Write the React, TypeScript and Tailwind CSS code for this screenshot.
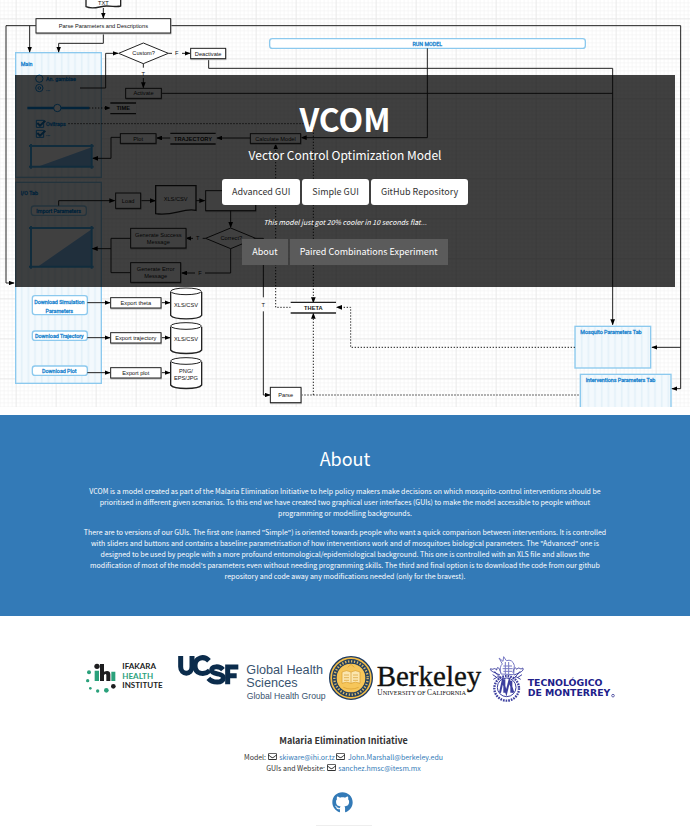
import type { ReactNode } from "react";
import { FaGithub, FaRegEnvelope } from "react-icons/fa";

const INK = "#222";
const SKY = "#8cc9ee";
const LABEL = "#2486cf";
const DEEP = "#0a8ce6";

type BoxProps = { x: number; y: number; w: number; h: number; lines?: string[] };

function Label({ x, y, children, bold }: { x: number; y: number; children: ReactNode; bold?: boolean }) {
  return (
    <text x={x} y={y + 6} textAnchor="middle" fill="#111" stroke="none" fontSize="17" fontWeight={bold ? 700 : 400}>
      {children}
    </text>
  );
}

function Box({ x, y, w, h, lines = [] }: BoxProps) {
  return (
    <g>
      <rect x={x + 1} y={y + 3} width={w} height={h} fill="#999" stroke="#bbb" strokeWidth="3" />
      <rect x={x} y={y} width={w} height={h} fill="#fff" />
      {lines.map((line, i) => (
        <Label key={line} x={x + w / 2} y={y + h / 2 + (i - (lines.length - 1) / 2) * 20}>
          {line}
        </Label>
      ))}
    </g>
  );
}

function Store({ x, y, w, name }: { x: number; y: number; w: number; name: string }) {
  return (
    <g>
      <rect x={x} y={y} width={w} height="32" fill="#fff" stroke="none" />
      <path d={`M${x} ${y}h${w}M${x} ${y + 32}h${w}`} strokeWidth="4" />
      <Label x={x + w / 2} y={y + 16} bold>
        {name}
      </Label>
    </g>
  );
}

function Cylinder({ x, y, lines }: { x: number; y: number; lines: string[] }) {
  return (
    <g>
      <path d={`M${x} ${y + 12}v70c10 14 83 14 93 0v-70`} fill="#fff" strokeWidth="4" />
      <ellipse cx={x + 46} cy={y + 10} rx="46" ry="10" fill="#fff" />
      {lines.map((line, i) => (
        <Label key={line} x={x + 46} y={y + 50 + (i - (lines.length - 1) / 2) * 20}>
          {line}
        </Label>
      ))}
    </g>
  );
}

function Wire({ d, dotted }: { d: string; dotted?: boolean }) {
  return <path d={d} fill="none" markerEnd="url(#tip)" strokeDasharray={dotted ? "4 5" : undefined} />;
}

function Panel({ x, y, w, h }: BoxProps) {
  return <rect x={x} y={y} width={w} height={h} fill="url(#hatch)" stroke={SKY} strokeWidth="4" />;
}

type NoteProps = { x: number; y: number; children: ReactNode; anchor?: "middle" | "start"; color?: string };

function Note({ x, y, children, anchor = "middle", color = LABEL }: NoteProps) {
  return (
    <text x={x} y={y + 6} textAnchor={anchor} fill={color} stroke={color} strokeWidth="1" fontSize="16" fontFamily="Roboto, sans-serif">
      {children}
    </text>
  );
}

function Pill({ x, y, w, h }: BoxProps) {
  return <rect x={x} y={y} width={w} height={h} rx="8" fill="#fff" stroke={SKY} strokeWidth="4" />;
}

function Plot({ x, y, h }: { x: number; y: number; h: number }) {
  return (
    <g>
      <rect x={x} y={y} width="182" height={h} fill="#fff" stroke="none" />
      <path d={`M${x + 20} ${y + h}L${x + 182} ${y + 4}v${h - 4}z`} fill="#80bcf0" stroke="none" />
      <path
        d={`M${x} ${y - 6}v${h + 12}M${x + 182} ${y - 6}v${h + 12}M${x - 6} ${y}h194M${x - 6} ${y + h}h194`}
        fill="none"
        stroke="#45b0f0"
        strokeWidth="6"
      />
    </g>
  );
}

function FlowDiagram() {
  return (
    <svg
      aria-hidden="true"
      className="absolute inset-0 h-full w-full"
      viewBox="0 0 2070 1221"
      preserveAspectRatio="xMidYMin slice"
      fontFamily="'Liberation Sans', Arial, sans-serif"
      stroke={INK}
      strokeWidth="3"
    >
      <defs>
        <pattern id="minor" x="47" y="55" width="12" height="12" patternUnits="userSpaceOnUse">
          <path d="M0 0H12M0 0V12" stroke="#f0f0f0" strokeWidth="3" />
        </pattern>
        <pattern id="major" x="47" y="55" width="120" height="120" patternUnits="userSpaceOnUse">
          <path d="M0 0H120M0 0V120" stroke="#e6e6e6" strokeWidth="4" />
        </pattern>
        <pattern id="hatch" width="20" height="20" patternUnits="userSpaceOnUse">
          <rect width="20" height="20" fill="#f3f9fd" stroke="none" />
          <path d="M5 0V20" stroke="#e4f1f9" strokeWidth="5" />
        </pattern>
        <marker id="tip" markerUnits="userSpaceOnUse" markerWidth="18" markerHeight="14" refX="16" refY="7" orient="auto">
          <path d="M0 0L18 7L0 14z" fill="#000" stroke="none" />
        </marker>
      </defs>
      <rect width="2070" height="1221" fill="url(#minor)" stroke="none" />
      <rect width="2070" height="1221" fill="url(#major)" stroke="none" />

      <Panel x={47} y={158} w={257} h={374} />
      <Panel x={47} y={547} w={257} h={603} />
      <Panel x={1725} y={979} w={227} h={125} />
      <Panel x={1741} y={1123} w={272} h={110} />

      <path d="M258 -10V20C280 30 300 18 320 18S350 22 362 18V-10" fill="#fff" strokeWidth="4" />
      <Label x={310} y={9}>TXT</Label>
      <Wire d="M310 24V54" />
      <Wire d="M108 77H18V849H42" />
      <Wire d="M89 77V156" />
      <Wire d="M310 100V130H176V156" />
      <path d="M512 77H2042V1166" fill="none" />
      <Wire d="M2042 1042H1956" />
      <Wire d="M2042 1166H2016" />
      <Box x={108} y={56} w={404} h={43} lines={["Parse Parameters and Descriptions"]} />

      <Wire d="M240 264H317V160H354" />
      <path d="M356 160L430 129L505 160L430 191z" fill="#fff" />
      <Label x={431} y={160}>Custom?</Label>
      <path d="M505 160H516M430 191V203" />
      <Label x={530} y={160}>F</Label>
      <Wire d="M546 160H570" />
      <Label x={430} y={221}>T</Label>
      <Wire d="M430 234V263" />
      <path d="M626 176V205H1838" fill="none" />
      <Wire d="M1838 205V974" />
      <path d="M484 280H1838" />
      <Box x={572} y={145} w={105} h={31} lines={["Deactivate"]} />
      <Box x={377} y={265} w={107} h={30} lines={["Activate"]} />

      <Pill x={809} y={116} w={947} h={29} />
      <Note x={1282} y={132}>RUN MODEL</Note>
      <Wire d="M1282 145V413H904" />
      <Wire d="M751 414H651" />
      <Wire d="M512 414H470" />
      <Wire d="M361 412H333V475H278" />
      <Wire d="M186 324H330" dotted />
      <path d="M205 371H940" strokeDasharray="4 5" />
      <Wire d="M940 371V908" dotted />
      <Wire d="M872 922H827V432" dotted />
      <Store x={331} y={309} w={77} name="TIME" />
      <Store x={511} y={400} w={136} name="TRAJECTORY" />
      <Box x={361} y={401} w={107} h={29} lines={["Plot"]} />
      <Box x={751} y={401} w={151} h={29} lines={["Calculate Model"]} />

      <Note x={62} y={192} anchor="start">Main</Note>
      <g fill="none" stroke={DEEP}>
        <circle cx="118" cy="236" r="11" />
        <circle cx="118" cy="264" r="11" />
        <circle cx="118" cy="264" r="4" />
        <path d="M82 324H268" strokeWidth="8" />
        <circle cx="172" cy="324" r="11" fill="#fff" />
        <path d="M109 361h22v21h-22zM109 391h22v21h-22z" />
        <path d="M112 369l8 8l16-15M112 399l8 8l16-15" stroke="#1478c0" strokeWidth="6" />
      </g>
      <Note x={138} y={237} anchor="start" color={DEEP}>An. gambiae</Note>
      <Note x={138} y={266} anchor="start" color={DEEP}>...</Note>
      <Note x={138} y={371} anchor="start" color={DEEP}>Ovitraps</Note>
      <Note x={138} y={402} anchor="start" color={DEEP}>...</Note>
      <Plot x={93} y={438} h={62} />

      <Note x={62} y={580} anchor="start" color={DEEP}>I/O Tab</Note>
      <Pill x={94} y={618} w={165} h={28} />
      <Note x={176} y={634} color={DEEP}>Import Parameters</Note>
      <Plot x={93} y={684} h={116} />
      <Wire d="M176 617V602H344" />
      <Wire d="M423 602H466" />
      <Wire d="M588 602H614" />
      <Box x={347} y={579} w={75} h={46} lines={["Load"]} />
      <path d="M467 557H588V631C550 622 520 650 467 641z" fill="#fff" strokeWidth="4" />
      <Label x={527} y={598}>XLS/CSV</Label>
      <Box x={617} y={572} w={150} h={60} />
      <Wire d="M692 632V682" />
      <path d="M617 715L692 684L767 715L692 746z" fill="#fff" />
      <Label x={694} y={715}>Correct?</Label>
      <path d="M617 715H608M767 715H790V892" fill="none" />
      <Label x={593} y={715}>T</Label>
      <Wire d="M579 715H558" />
      <path d="M692 746V819H615" fill="none" />
      <Label x={600} y={819}>F</Label>
      <Wire d="M585 819H545" />
      <path d="M392 715H333V818H392" fill="none" />
      <Wire d="M333 746H277" />
      <Box x={392} y={685} w={166} h={59} lines={["Generate Success", "Message"]} />
      <Box x={392} y={788} w={150} h={59} lines={["Generate Error", "Message"]} />

      <Pill x={97} y={887} w={165} h={57} />
      <Note x={178} y={906}>Download Simulation</Note>
      <Note x={178} y={932}>Parameters</Note>
      <Pill x={97} y={993} w={165} h={28} />
      <Note x={178} y={1009}>Download Trajectory</Note>
      <Pill x={97} y={1098} w={165} h={28} />
      <Note x={178} y={1114}>Download Plot</Note>
      <Wire d="M262 908H330" />
      <Wire d="M262 1013H330" />
      <Wire d="M262 1118H330" />
      <Wire d="M484 908H510" />
      <Wire d="M484 1013H510" />
      <Wire d="M484 1118H510" />
      <Box x={332} y={893} w={151} h={31} lines={["Export theta"]} />
      <Box x={332} y={998} w={151} h={31} lines={["Export trajectory"]} />
      <Box x={332} y={1103} w={151} h={31} lines={["Export plot"]} />
      <Cylinder x={512} y={864} lines={["XLS/CSV"]} />
      <Cylinder x={512} y={968} lines={["XLS/CSV"]} />
      <Cylinder x={512} y={1073} lines={["PNG/", "EPS/JPG"]} />

      <Label x={790} y={914}>T</Label>
      <Wire d="M790 934V1185H810" />
      <Wire d="M904 1185H940V940" dotted />
      <path d="M940 1185H1741" strokeDasharray="4 5" />
      <Wire d="M1725 1042H1052V922H1010" dotted />
      <Store x={872} y={907} w={136} name="THETA" />
      <Box x={811} y={1162} w={92} h={46} lines={["Parse"]} />
      <Note x={1741} y={997} anchor="start">Mosquito Parameters Tab</Note>
      <Note x={1757} y={1141} anchor="start">Interventions Parameters Tab</Note>
    </svg>
  );
}

function IfakaraLogo() {
  return (
    <svg role="img" aria-label="Ifakara Health Institute" className="mr-[14px] h-12 w-[78px]" viewBox="48 45 234 144">
      <g fill="#2aa17b">
        <circle cx="60" cy="97" r="6" />
        <circle cx="56" cy="122" r="5" />
        <circle cx="64" cy="145" r="4" />
        <circle cx="86" cy="153" r="5" />
        <circle cx="112" cy="151" r="7" />
        <path d="M77 92h13v31h-13zM127 95h12v28h-12z" />
      </g>
      <g fill="#1d1d1f">
        <circle cx="84" cy="79" r="8" />
        <circle cx="133" cy="139" r="7" />
        <path d="M93 72h12v23q18-6 19 8v20h-12v-18q-1-6-7 0v18h-12z" />
      </g>
      <g fontFamily="Lato, sans-serif" fontWeight="700" fontSize="24">
        <text x="160" y="88" fill="#222">IFAKARA</text>
        <text x="160" y="116" fill="#2aa17b">HEALTH</text>
        <text x="160" y="145" fill="#222">INSTITUTE</text>
      </g>
    </svg>
  );
}

function UcsfLogo() {
  return (
    <svg role="img" aria-label="UCSF Global Health Sciences, Global Health Group" className="h-12 w-38" viewBox="321 45 456 144">
      <g fill="none" stroke="#0b2c4c" strokeWidth="15">
        <path d="M332 48V80C332 106 366 106 366 80V48" />
        <path d="M417 62C402 46 375 52 375 77C375 102 402 107 419 92" />
        <path d="M459 89C447 76 425 79 425 91C425 106 460 97 460 113C460 130 428 130 415 115" />
        <path d="M473 133V81H505M473 107H500" />
      </g>
      <g fill="#39536f" fontFamily="'Liberation Sans', Arial, sans-serif">
        <text x="529" y="101" fontSize="38">Global Health</text>
        <text x="529" y="141" fontSize="38">Sciences</text>
        <text x="530" y="178" fontSize="26">Global Health Group</text>
      </g>
    </svg>
  );
}

function BerkeleyLogo() {
  return (
    <svg role="img" aria-label="Berkeley, University of California" className="mr-1 h-12 w-[155px]" viewBox="27 45 465 144">
      <circle cx="93" cy="114" r="64" fill="#f3bd48" stroke="#1c3a63" strokeWidth="4" />
      <circle cx="93" cy="114" r="50" fill="none" stroke="#24405f" strokeWidth="14" />
      <circle cx="93" cy="114" r="50" fill="none" stroke="#d9b765" strokeWidth="7" strokeDasharray="4 5" />
      <circle cx="93" cy="114" r="42" fill="#f6c65a" />
      <path d="M66 96q14-8 27 0q13-8 27 0v34q-14-7-27 0q-13-7-27 0z" fill="#fbe6ae" stroke="#d79c2e" strokeWidth="2" />
      <path d="M93 96v34M72 105h15M72 113h15M99 105h15M99 113h15M72 121h15M99 121h15M70 142q23 10 46 0M83 82l10-9 10 9" fill="none" stroke="#d79c2e" strokeWidth="2" />
      <g fill="#111" fontFamily="'Liberation Serif', 'Times New Roman', serif">
        <text x="170" y="137" fontSize="87" stroke="#111" strokeWidth="1">Berkeley</text>
        <text x="172" y="166" fontSize="22">
          U<tspan fontSize="19">NIVERSITY OF </tspan>C<tspan fontSize="19">ALIFORNIA</tspan>
        </text>
      </g>
    </svg>
  );
}

function TecLogo() {
  return (
    <svg role="img" aria-label="Tecnológico de Monterrey" className="h-12 w-[127px]" viewBox="504 45 381 144">
      <g fill="none" stroke="#3d3f9f" strokeWidth="3">
        <circle cx="560" cy="145" r="37" strokeWidth="7" strokeDasharray="5 3" />
        <circle cx="560" cy="142" r="28" />
        <path d="M540 158L548 122L559 158L568 122L580 158M553 118v40M574 122v36" strokeWidth="6" />
        <path d="M540 105C520 96 508 92 512 86C522 92 520 80 530 90C532 74 540 88 542 98M582 105C600 98 614 92 608 84C600 92 598 78 590 88C584 76 580 90 579 98" />
        <path d="M524 94q8 12 16 18M600 94q-8 12-16 18M518 104l12 8M606 104l-12 8" />
        <path d="M543 102q-6-22 4-30l-10-18 12 10 2-14 8 12q18-6 24 14l-2 28zM550 78h26M548 86h30M550 94h26M556 66v36M566 66v36" stroke="#7779c4" />
        <path d="M520 118l14-8 10 8M602 118l-14-8-10 8" />
      </g>
      <g fill="#20208a" fontFamily="'DejaVu Sans', sans-serif" fontWeight="700" fontSize="28">
        <text x="623" y="137">TECNOLÓGICO</text>
        <text x="623" y="167">DE MONTERREY</text>
      </g>
      <circle cx="879" cy="167" r="4" fill="none" stroke="#20208a" strokeWidth="2" />
    </svg>
  );
}

function Mail({ address }: { address: string }) {
  return (
    <>
      <FaRegEnvelope className="mr-px inline size-[9px] align-[-1px]" aria-hidden="true" />{" "}
      <a href={`mailto:${address}`} className="text-[#337ab7]">
        {address}
      </a>
    </>
  );
}

const primary = "h-[26px] rounded-[3px] bg-white px-[10px] text-[9px] text-[#333]";
const secondary = "h-[26px] bg-[#5b5b5b] px-[10px] text-[9px] text-white";

export default function App() {
  return (
    <div className="min-h-screen bg-white font-['Noto_Sans_CJK_SC',sans-serif] text-[#333]">
      <header className="relative overflow-hidden px-[15px] pt-[75px] pb-[120px]">
        <FlowDiagram />
        <div className="relative flex flex-col items-center bg-black/75 pt-6 pb-[22px] text-white">
          <h1 className="text-[32px] leading-[38px] font-bold">VCOM</h1>
          <p className="mt-2 text-[12px] leading-5">Vector Control Optimization Model</p>
          <nav className="mt-[14px] flex gap-[2px]" aria-label="Applications">
            <button className={primary}>Advanced GUI</button>
            <button className={primary}>Simple GUI</button>
            <button className={primary}>GitHub Repository</button>
          </nav>
          <p className="mt-[11px] text-[7px] leading-3 italic">This model just got 20% cooler in 10 seconds flat...</p>
          <nav className="mt-[11px] flex gap-[2px]" aria-label="Sections">
            <button className={secondary}>About</button>
            <button className={secondary}>Paired Combinations Experiment</button>
          </nav>
        </div>
      </header>

      <section className="mt-2 bg-[#337ab7] px-4 pt-[29px] pb-[34px] text-center text-white">
        <h2 className="text-[18px] leading-7">About</h2>
        <div className="mx-auto mt-[14px] max-w-[530px] text-[7px] leading-[11px]">
          <p>
            VCOM is a model created as part of the Malaria Elimination Initiative to help policy makers make decisions on which mosquito-control interventions should be
            <br />
            prioritised in different given scenarios. To this end we have created two graphical user interfaces (GUIs) to make the model accessible to people without
            <br />
            programming or modelling backgrounds.
          </p>
          <p className="mt-2">
            There are to versions of our GUIs. The first one (named "Simple") is oriented towards people who want a quick comparison between interventions. It is controlled
            <br />
            with sliders and buttons and contains a baseline parametrisation of how interventions work and of mosquitoes biological parameters. The "Advanced" one is
            <br />
            designed to be used by people with a more profound entomological/epidemiological background. This one is controlled with an XLS file and allows the
            <br />
            modification of most of the model's parameters even without needing programming skills. The third and final option is to download the code from our github
            <br />
            repository and code away any modifications needed (only for the bravest).
          </p>
        </div>
      </section>

      <div className="mt-[39px] flex justify-center pl-[10px]">
        <IfakaraLogo />
        <UcsfLogo />
        <BerkeleyLogo />
        <TecLogo />
      </div>

      <footer className="mt-[31px] flex flex-col items-center pr-[3px] text-center">
        <h3 className="text-[9px] leading-[14px] font-bold">Malaria Elimination Initiative</h3>
        <div className="mt-1 text-[7px] leading-[11px]">
          <p>
            Model: <Mail address="skiware@ihi.or.tz" /> <Mail address="John.Marshall@berkeley.edu" />
          </p>
          <p>
            GUIs and Website: <Mail address="sanchez.hmsc@itesm.mx" />
          </p>
        </div>
        <a href="#github" aria-label="GitHub" className="mt-[18px] mr-[3px] text-[#337ab7]">
          <FaGithub className="size-[21px]" />
        </a>
        <hr className="mt-3 w-14 border-[#eee]" />
      </footer>
    </div>
  );
}
